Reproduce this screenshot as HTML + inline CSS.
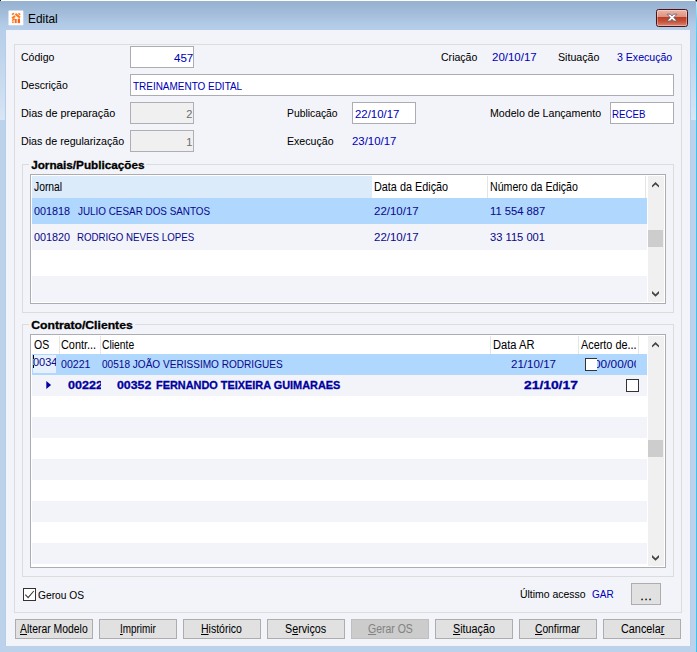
<!DOCTYPE html>
<html lang="pt-BR">
<head>
<meta charset="utf-8">
<title>Edital</title>
<style>
html,body{margin:0;padding:0;background:#b9d1ea;overflow:hidden}
body{width:697px;height:652px;position:relative;font:11px/14px 'Liberation Sans',sans-serif;color:#000}
.win{position:absolute;left:0;top:0;width:697px;height:652px;background:#bbd2ea;overflow:hidden}
.win>*, .abs{position:absolute}
.cornl,.cornr{z-index:3}
.topline{left:0;top:0;width:697px;height:1px;background:#fff}
.rcol{left:696px;top:1px;width:1px;height:651px;background:linear-gradient(#c8effa 0,#62d3f4 20px,#32c8f1 60px,#32c8f1 100%)}
.cornl{left:0;top:0;width:2px;height:2px;background:linear-gradient(135deg,#222 0,#222 38%,rgba(0,0,0,0) 50%)}
.cornr{left:694px;top:0;width:3px;height:2px;background:linear-gradient(225deg,#000 0,#000 38%,rgba(0,0,0,0) 42%)}
.capgrad{left:0;top:0;width:697px;height:30px;background:linear-gradient(#97b2d1 0,#9bb6d4 6px,#a3bddb 14px,#b0c9e5 23px,#b6cee9 30px)}
.sideL,.sideR{top:30px;width:5px;height:90px;background:linear-gradient(#b6cee9 0,#c6d9ee 45px,#d8e5f4 90px)}
.sideL{left:0}.sideR{left:691px}
.edgeL,.edgeR{top:30px;width:1px;height:616px;background:#b4cde8}
.edgeL{left:5px}.edgeR{left:690px}
.client{left:6px;top:30px;width:684px;height:616px;background:#f3f4fa}
.t{position:absolute;white-space:pre;transform-origin:0 0;font:11px/14px 'Liberation Sans',sans-serif;color:#000;-webkit-text-stroke:0.04px}
.t.b{font-weight:bold;-webkit-text-stroke:0.3px}
.clip{position:absolute}
.clip>.t{position:absolute}
.t u{text-decoration:underline;text-underline-offset:1px;text-decoration-thickness:1px}

.panel{left:14px;top:44px;width:668px;height:569px;border:1px solid #dcdcdc;box-sizing:border-box}
.grp{border:1px solid #dcdcdc;box-sizing:border-box}
.t.cap{background:#f3f4fa;padding:0 2px;margin-left:-2px}
.inp{background:#fff;border:1px solid #abadb3;box-sizing:border-box;height:22px}
.inp.dis{background:#f0f0f0;border-color:#adafb4}
.grid{border:1px solid #abadb3;box-sizing:border-box;background:#fff;overflow:hidden}
.grid>*{position:absolute}
.alt{left:0;width:615px;background:#f3f4fa}
.sel{left:0;width:615px;background:#b0d7fe}
.sb{width:17px;background:#f0f0f0}
.thumb{background:#cdcdcd}
.btn{position:absolute;top:619px;width:78px;height:20px;box-sizing:border-box;border:1px solid #adadad;background:#e1e1e1;text-align:center;font:11px/18px 'Liberation Sans',sans-serif;color:#000;letter-spacing:-0.2px}
.btn.dis{color:#838383;background:#cccccc;border-color:#bfbfbf}
.cb{box-sizing:border-box;width:13px;height:13px;border:1px solid #333;background:#fff}
</style>
</head>
<body>
<div class="win">
  <div class="capgrad"></div><div class="sideL"></div><div class="sideR"></div><div class="edgeL"></div><div class="edgeR"></div><div class="topline"></div><div class="rcol"></div><div class="cornl"></div><div class="cornr"></div>
  <!-- title bar -->
  <svg class="icon" style="left:8px;top:10px" width="16" height="16" viewBox="0 0 16 16">
    <rect x="0.5" y="0.5" width="14.8" height="14.8" rx="0.6" fill="#fff"/>
    <g fill="none" stroke="#ff7a1e" stroke-linecap="butt">
      <path d="M4 4.6L6 3.2" stroke-width="1.7"/>
      <path d="M10.4 3.4L12.2 4.6" stroke-width="1.7"/>
      <path d="M7.4 3.9L12 7.6" stroke-width="2.1"/>
      <path d="M4.1 8.4L7.1 6" stroke-width="2"/>
      <path d="M4.2 10.6L6.6 8.6" stroke-width="1.5"/>
    </g>
    <rect x="3.9" y="11.3" width="1.8" height="1.8" fill="#ff8a3a"/>
    <rect x="6.7" y="9" width="2" height="4.1" fill="#ff6a14"/>
    <rect x="9.7" y="8.7" width="2.3" height="4.4" fill="#ff5d08"/>
  </svg>
  <div class="close" style="left:656px;top:9px;width:32px;height:18px;box-sizing:border-box;border:1px solid #47161d;border-radius:2.5px;background:linear-gradient(#eeb4a5 0,#dd9281 43%,#b93c22 44%,#c6523a 72%,#db8672 100%);box-shadow:inset 0 0 0 1px rgba(255,255,255,.35)">
    <svg width="30" height="16" viewBox="0 0 30 16" style="position:absolute;left:0;top:0">
      <path d="M10 4.2h3.2l1.8 1.7 1.8-1.7h3.2l-3.2 3.4 3.2 3.4h-3.2l-1.8-1.7-1.8 1.7h-3.2l3.2-3.4z" fill="#fff" stroke="#6b6b78" stroke-width="0.9" stroke-linejoin="round"/>
    </svg>
  </div>
  <div class="client"></div>
  <div class="panel"></div>
  <!-- inputs -->
  <div class="inp" style="left:130px;top:46px;width:64px"></div>
  <div class="inp" style="left:130px;top:74px;width:544px"></div>
  <div class="inp dis" style="left:130px;top:102px;width:64px"></div>
  <div class="inp dis" style="left:130px;top:130px;width:64px"></div>
  <div class="inp" style="left:352px;top:102px;width:64px"></div>
  <div class="inp" style="left:610px;top:102px;width:64px"></div>
  <!-- group boxes -->
  <div class="grp" style="left:22px;top:164px;width:652px;height:149px"></div>
  <div class="grp" style="left:22px;top:324px;width:652px;height:253px"></div>
  <!-- grid 1 -->
  <div class="grid" style="left:30px;top:174px;width:636px;height:130px">
    <div style="left:1px;top:1px;width:340px;height:22px;background:#dcebf9"></div>
    <div style="left:456px;top:1px;width:1px;height:22px;background:#e5e5e5"></div>
    <div style="left:614px;top:1px;width:1px;height:22px;background:#e5e5e5"></div>
    <div class="sel" style="left:1px;top:23px;height:26px;width:615px"></div>
    <div class="alt" style="left:1px;top:49px;height:26px;width:615px"></div>
    <div class="alt" style="left:1px;top:101px;height:26px;width:615px"></div>
    <div class="sb" style="left:617px;top:1px;width:16px;height:126px"></div>
    <div class="thumb" style="left:617px;top:55px;width:15px;height:17px"></div>
    <svg style="left:617px;top:1px" width="16" height="126" viewBox="0 0 16 126"><path d="M4 9.4L7.5 6L11 9.4V11.6L7.5 8.4L4 11.6zM4 117.4L7.5 120.8L11 117.4V115L7.5 118.3L4 115z" fill="#454545"/></svg>
  </div>
  <!-- grid 2 -->
  <div class="grid" style="left:30px;top:334px;width:636px;height:234px">
    <div style="left:28px;top:1px;width:1px;height:18px;background:#e5e5e5"></div>
    <div style="left:69px;top:1px;width:1px;height:18px;background:#e5e5e5"></div>
    <div style="left:459px;top:1px;width:1px;height:18px;background:#e5e5e5"></div>
    <div style="left:547px;top:1px;width:1px;height:18px;background:#e5e5e5"></div>
    <div style="left:607px;top:1px;width:1px;height:18px;background:#e5e5e5"></div>
    <div class="sel" style="left:1px;top:19px;height:21px;width:615px"></div>
<div class="alt" style="left:1px;top:40px;height:21px"></div>
<div class="alt" style="left:1px;top:82px;height:21px"></div>
<div class="alt" style="left:1px;top:124px;height:21px"></div>
<div class="alt" style="left:1px;top:166px;height:21px"></div>
<div class="alt" style="left:1px;top:208px;height:21px"></div>
    <div class="sb" style="left:617px;top:1px;width:16px;height:230px"></div>
    <div class="thumb" style="left:617px;top:105px;width:15px;height:17px"></div>
    <svg style="left:617px;top:1px" width="16" height="230" viewBox="0 0 16 230"><path d="M4 9.4L7.5 6L11 9.4V11.6L7.5 8.4L4 11.6zM4 221.4L7.5 224.8L11 221.4V219L7.5 222.3L4 219z" fill="#454545"/></svg>
  </div>
  <!-- OS edit cell -->
  <div style="left:33px;top:355px;width:23px;height:18px;background:#e6f1fd"></div>
  <div style="left:33px;top:355px;width:1px;height:13px;background:linear-gradient(#000 0,#000 4px,#8fd95a 4px,#8fd95a 10px,#000 10px)"></div>
  <!-- row 2 marker -->
  <svg style="left:46px;top:381px" width="6" height="8" viewBox="0 0 6 8"><path d="M0.3 0L5.1 4L0.3 8z" fill="#0000a0"/></svg>
  <!-- checkboxes in grid -->
  <div class="cb" style="left:585px;top:358px"></div>
  <div style="left:597px;top:355px;width:39px;height:19px;background:#b0d7fe"></div>
  <div class="cb" style="left:626px;top:379px"></div>
  <!-- bottom -->
  <div class="cb" style="left:23px;top:588px"></div>
  <svg style="left:23px;top:588px" width="13" height="13" viewBox="0 0 13 13"><path d="M2.3 6.6L5.1 9.6L10.8 3" fill="none" stroke="#3c3c3c" stroke-width="1.1"/></svg>
  <div class="btn" style="left:631px;top:583px;width:30px;height:22px;line-height:24px;letter-spacing:1px;text-indent:1px;-webkit-text-stroke:0.3px">...</div>
<div class="btn" style="left:15px"></div>
<div class="btn" style="left:99px"></div>
<div class="btn" style="left:183px"></div>
<div class="btn" style="left:267px"></div>
<div class="btn dis" style="left:351px"></div>
<div class="btn" style="left:435px"></div>
<div class="btn" style="left:519px"></div>
<div class="btn" style="left:603px"></div>
<span class="t title" style="left:28.05px;top:12.00px;font-size:12.5px;transform:scaleX(0.949)">Edital</span>
<span class="t" style="left:21.32px;top:50.00px;transform:scaleX(0.956)">Código</span>
<span class="t" style="left:20.84px;top:78.00px;transform:scaleX(0.956)">Descrição</span>
<span class="t" style="left:20.82px;top:106.00px;transform:scaleX(0.981)">Dias de preparação</span>
<span class="t" style="left:20.83px;top:134.00px;transform:scaleX(0.970)">Dias de regularização</span>
<span class="t" style="left:173.94px;top:51.00px;transform:scaleX(1.051);color:#0000b8">457</span>
<span class="t" style="left:186.20px;top:107.00px;color:#6d6d6d">2</span>
<span class="t" style="left:186.20px;top:135.00px;color:#6d6d6d">1</span>
<span class="t" style="left:133.37px;top:79.00px;transform:scaleX(0.905);color:#0000b8">TREINAMENTO EDITAL</span>
<span class="t" style="left:287.06px;top:106.00px;transform:scaleX(0.939)">Publicação</span>
<span class="t" style="left:355.18px;top:107.00px;transform:scaleX(1.035);color:#0000b8">22/10/17</span>
<span class="t" style="left:287.04px;top:134.00px;transform:scaleX(0.964)">Execução</span>
<span class="t" style="left:352.18px;top:134.00px;transform:scaleX(1.035);color:#0000b8">23/10/17</span>
<span class="t" style="left:441.32px;top:50.00px;transform:scaleX(0.959)">Criação</span>
<span class="t" style="left:492.18px;top:50.00px;transform:scaleX(1.044);color:#0000b8">20/10/17</span>
<span class="t" style="left:558.12px;top:50.00px;transform:scaleX(0.969)">Situação</span>
<span class="t" style="left:616.82px;top:50.00px;transform:scaleX(0.961);color:#0000b8">3 Execução</span>
<span class="t" style="left:489.73px;top:106.00px;transform:scaleX(0.966)">Modelo de Lançamento</span>
<span class="t" style="left:611.72px;top:107.00px;transform:scaleX(0.880);color:#0000b8">RECEB</span>
<span class="t b cap" style="left:31.30px;top:158.00px;transform:scaleX(1.066)">Jornais/Publicações</span>
<span class="t b cap" style="left:31.02px;top:318.00px;transform:scaleX(1.107)">Contrato/Clientes</span>
<span class="t" style="left:34.09px;top:180.00px;font-size:12.5px;transform:scaleX(0.827)">Jornal</span>
<span class="t" style="left:373.83px;top:180.00px;font-size:12.5px;transform:scaleX(0.867)">Data da Edição</span>
<span class="t" style="left:489.85px;top:180.00px;font-size:12.5px;transform:scaleX(0.849)">Número da Edição</span>
<span class="t" style="left:33.81px;top:204.00px;transform:scaleX(0.982);color:#0a0a8c">001818</span>
<span class="t" style="left:78.08px;top:204.00px;transform:scaleX(0.898);color:#0a0a8c">JULIO CESAR DOS SANTOS</span>
<span class="t" style="left:374.18px;top:204.00px;transform:scaleX(1.044);color:#0a0a8c">22/10/17</span>
<span class="t" style="left:489.94px;top:204.00px;transform:scaleX(1.019);color:#0a0a8c">11 554 887</span>
<span class="t" style="left:33.81px;top:230.00px;transform:scaleX(0.982);color:#0a0a8c">001820</span>
<span class="t" style="left:76.92px;top:230.00px;transform:scaleX(0.883);color:#0a0a8c">RODRIGO NEVES LOPES</span>
<span class="t" style="left:374.18px;top:230.00px;transform:scaleX(1.044);color:#0a0a8c">22/10/17</span>
<span class="t" style="left:490.19px;top:230.00px;transform:scaleX(1.014);color:#0a0a8c">33 115 001</span>
<span class="t" style="left:33.88px;top:338.00px;font-size:12.5px;transform:scaleX(0.841)">OS</span>
<span class="t" style="left:61.36px;top:338.00px;font-size:12.5px;transform:scaleX(0.872)">Contr...</span>
<span class="t" style="left:102.49px;top:338.00px;font-size:12.5px;transform:scaleX(0.826)">Cliente</span>
<span class="t" style="left:492.81px;top:338.00px;font-size:12.5px;transform:scaleX(0.891)">Data AR</span>
<span class="t" style="left:581.30px;top:338.00px;font-size:12.5px;transform:scaleX(0.869)">Acerto de...</span>
<span class="t" style="left:61.02px;top:357.00px;transform:scaleX(0.963);color:#0a0a8c">00221</span>
<span class="t" style="left:102.44px;top:357.00px;transform:scaleX(0.915);color:#0a0a8c">00518 JOÃO VERISSIMO RODRIGUES</span>
<span class="t" style="left:511.17px;top:357.00px;transform:scaleX(1.051);color:#0a0a8c">21/10/17</span>
<div class="clip" style="left:60px;top:378px;width:41px;height:14px;overflow:hidden"><span class="t b" style="left:8.42px;top:0px;transform:scaleX(1.140);color:#0000a0">00222</span></div>
<span class="t b" style="left:117.32px;top:378.00px;transform:scaleX(1.120);color:#0000a0">00352</span>
<span class="t b" style="left:156.00px;top:378.00px;transform:scaleX(0.991);color:#0000a0">FERNANDO TEIXEIRA GUIMARAES</span>
<span class="t b" style="left:524.39px;top:378.00px;transform:scaleX(1.257);color:#0000a0">21/10/17</span>
<div class="clip" style="left:33px;top:355px;width:23px;height:14px;overflow:hidden"><span class="t" style="left:-0.10px;top:0px;color:#0a0a8c">0034</span></div>
<div class="clip" style="left:597px;top:357px;width:39px;height:14px;overflow:hidden;background:#b0d7fe"><span class="t" style="left:-2.94px;top:0px;transform:scaleX(1.081);color:#0a0a8c">00/00/00</span></div>
<span class="t" style="left:37.64px;top:588.00px;transform:scaleX(0.930)">Gerou OS</span>
<span class="t" style="left:519.99px;top:587.00px;transform:scaleX(0.950)">Último acesso</span>
<span class="t" style="left:592.45px;top:587.00px;transform:scaleX(0.910);color:#0000b8">GAR</span>
<span class="t bl" style="left:20.30px;top:622.00px;font-size:12.5px;transform:scaleX(0.833)"><u>A</u>lterar Modelo</span>
<span class="t bl" style="left:119.81px;top:622.00px;font-size:12.5px;transform:scaleX(0.791)"><u>I</u>mprimir</span>
<span class="t bl" style="left:200.76px;top:622.00px;font-size:12.5px;transform:scaleX(0.840)"><u>H</u>istórico</span>
<span class="t bl" style="left:285.06px;top:622.00px;font-size:12.5px;transform:scaleX(0.860)">S<u>e</u>rviços</span>
<span class="t bl" style="left:367.68px;top:622.00px;font-size:12.5px;transform:scaleX(0.838);color:#838383"><u>G</u>erar OS</span>
<span class="t bl" style="left:452.85px;top:622.00px;font-size:12.5px;transform:scaleX(0.861)"><u>S</u>ituação</span>
<span class="t bl" style="left:535.19px;top:622.00px;font-size:12.5px;transform:scaleX(0.820)"><u>C</u>onfirmar</span>
<span class="t bl" style="left:620.57px;top:622.00px;font-size:12.5px;transform:scaleX(0.867)">Cancela<u>r</u></span>
</div>
</body>
</html>
